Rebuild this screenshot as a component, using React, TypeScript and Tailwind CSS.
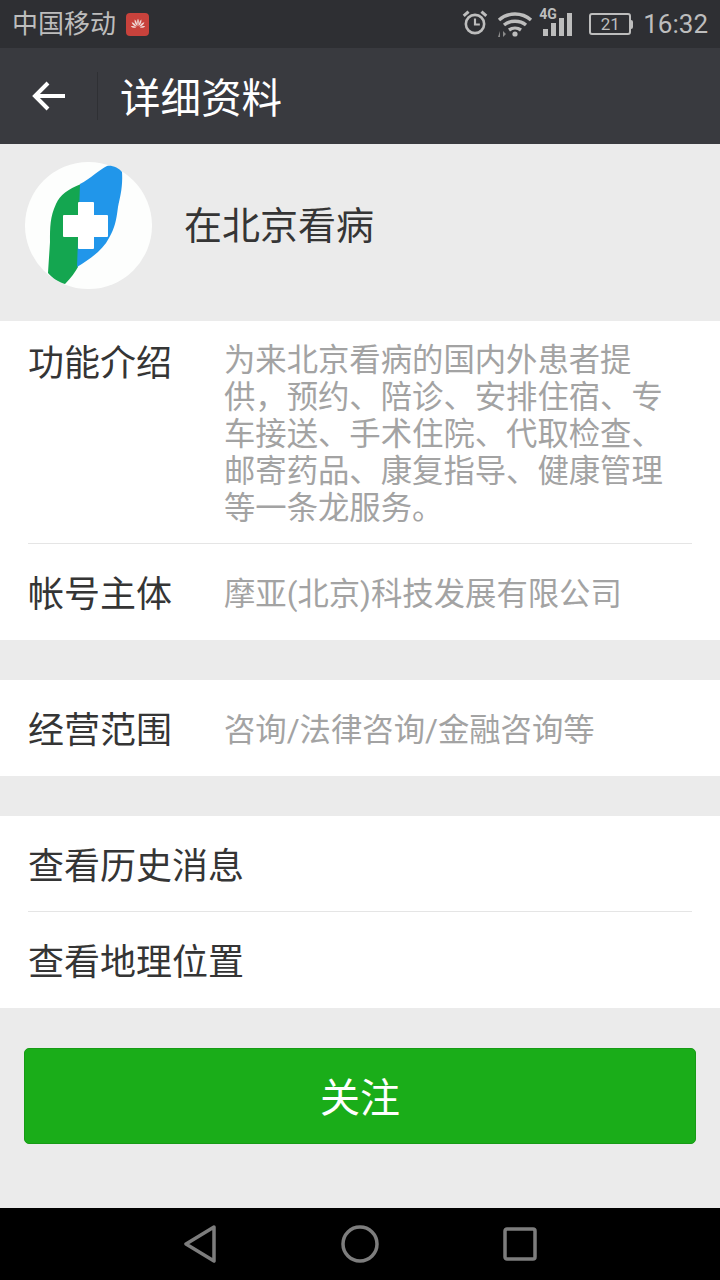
import React from "react";

const cjk = "font-['Roboto','Noto_Sans_CJK_SC',sans-serif]";

const StatusBar = () => (
  <div className="flex h-12 items-center justify-between bg-[#2e2f33] pl-3 pr-3 text-[#bdbdbd]">
    <div className="flex items-center gap-[10px]">
      <span className="text-[26px] leading-none">中国移动</span>
      <div className="flex h-[23px] w-[23px] items-center justify-center rounded-[4px] bg-[#c8423c]">
        <svg viewBox="0 0 24 24" className="h-[18px] w-[18px]" fill="#f0d9d6">
          <path d="M12 5c1.500 2 1.500 5 0 10-1.500-5-1.500-8 0-10z" />
          <path d="M7.500 6c2 1.500 3.500 4.500 3.700 9C8.500 12.500 7 9.500 7.500 6z" />
          <path d="M16.500 6c-2 1.500-3.500 4.500-3.700 9 2.700-2.500 4.200-5.500 3.700-9z" />
          <path d="M3.500 9.500c3 .5 5.500 3 6.700 6.200C7 15 4.500 13 3.500 9.500z" />
          <path d="M20.500 9.500c-3 .5-5.500 3-6.700 6.200 3.200-.7 5.700-2.700 6.700-6.200z" />
          <path d="M2.500 15c2.500-.5 5 0 7 1.500-2.500 1-5 .5-7-1.500zM21.500 15c-2.500-.5-5 0-7 1.500 2.500 1 5 .5 7-1.500z" />
        </svg>
      </div>
    </div>
    <div className="flex items-center">
      <svg viewBox="0 2 26 26" className="h-7 w-7" fill="none" stroke="#bdbdbd" strokeWidth="2.400">
        <circle cx="13" cy="15" r="8.500" />
        <path d="M13 10v5.500h4.500" strokeWidth="2" />
        <path d="M2.500 7.500 7 3.500M23.500 7.500 19 3.500" strokeWidth="2.800" />
      </svg>
      <svg viewBox="0 1 36 28" className="ml-2 h-7 w-9" fill="none" stroke="#bdbdbd" strokeWidth="3.400">
        <path d="M2 11c9-8 23-8 32 0" />
        <path d="M7 16c6-5 16-5 22 0" />
        <path d="M12 21c3.500-2.500 8.500-2.500 12 0" />
        <circle cx="18" cy="25" r="2.600" fill="#bdbdbd" stroke="none" />
        <path d="M3 22v6H1zM6 22l3 3-3 3z" fill="#8a8a8a" stroke="none" />
      </svg>
      <div className="relative ml-2 h-[30px] w-[31px]">
        <span className="absolute -left-[2px] -top-[2px] font-['Roboto',sans-serif] text-[14px] leading-none font-bold">4G</span>
        <div className="absolute bottom-[3px] left-[2px] flex items-end gap-[3px]">
          <div className="h-[7px] w-[5px] bg-[#bdbdbd]" />
          <div className="h-[13px] w-[5px] bg-[#bdbdbd]" />
          <div className="h-[18px] w-[5px] bg-[#bdbdbd]" />
          <div className="h-[23px] w-[5px] bg-[#bdbdbd]" />
        </div>
      </div>
      <div className="ml-[17px] flex items-center">
        <div className="flex h-[22px] w-[42px] items-center justify-center rounded-[3px] border-2 border-[#bdbdbd] text-[17px] leading-none">21</div>
        <div className="h-[9px] w-[2px] rounded-r-sm bg-[#bdbdbd]" />
      </div>
      <span className="ml-[10px] text-[26px] leading-none">16:32</span>
    </div>
  </div>
);

const TitleBar = () => (
  <div className="flex h-24 items-center bg-[#393a3f]">
    <div className="flex h-12 w-[98px] items-center justify-center border-r border-[#2f3034]">
      <svg viewBox="0 0 34 30" className="h-[30px] w-[34px]" fill="none" stroke="#ffffff" strokeWidth="4">
        <path d="M33 15H3" />
        <path d="M16 2 3 15l13 13" />
      </svg>
    </div>
    <span className="ml-[22px] pt-[6px] text-[40.500px] leading-none text-white">详细资料</span>
  </div>
);

const Logo = () => (
  <div className="h-[127px] w-[127px] rounded-full bg-[#fdfefd]">
    <svg viewBox="0 0 127 127" className="h-[127px] w-[127px]">
      <path d="M56 22C43 27 35 33 31 42 25 55 25 65 25 80L23 111C27 116 34 120 40 122 46 116 50 110 53 105z" fill="#14a650" />
      <path d="M55 22C65 17 75 7 82 4 87 3 94 6 97 10 98 25 95 35 93 45 91 60 90 65 84 76 78 88 65 97 52 105z" fill="#2196ea" />
      <path d="M53 41a1 1 0 0 1 1-1h14a1 1 0 0 1 1 1v12h13a1 1 0 0 1 1 1v20a1 1 0 0 1-1 1H69v11a1 1 0 0 1-1 1H54a1 1 0 0 1-1-1V75H39a1 1 0 0 1-1-1V54a1 1 0 0 1 1-1h14z" fill="#ffffff" />
    </svg>
  </div>
);

const InfoRow = ({ label, value }: { label: string; value: string }) => (
  <div className="flex h-24 items-center px-7 pt-[6px]">
    <span className="w-[196px] shrink-0 text-[36px] leading-none text-[#353535]">{label}</span>
    <span className="text-[31.350px] leading-none text-[#a3a3a3]">{value}</span>
  </div>
);

const LinkRow = ({ label }: { label: string }) => (
  <div className="flex h-24 items-center pl-7 pt-[6px] text-[36px] leading-none text-[#353535]">{label}</div>
);

export default function App() {
  return (
    <div className={`flex h-[1280px] w-[720px] flex-col overflow-hidden bg-[#ebebeb] ${cjk}`}>
      <StatusBar />
      <TitleBar />

      <div className="flex h-[177px] items-center gap-8 pb-[14px] pl-[25px]">
        <Logo />
        <span className="text-[38px] leading-none text-[#353535]">在北京看病</span>
      </div>

      <div className="bg-white">
        <div className="mx-7 flex h-[223px] border-b border-[#e5e5e5] pt-[21px]">
          <span className="w-[196px] shrink-0 text-[36px] leading-[44px] text-[#353535]">功能介绍</span>
          <p className="w-[444px] text-[31.350px] leading-[37px] text-[#a3a3a3]">
            为来北京看病的国内外患者提供，预约、陪诊、安排住宿、专车接送、手术住院、代取检查、邮寄药品、康复指导、健康管理等一条龙服务。
          </p>
        </div>
        <InfoRow label="帐号主体" value="摩亚(北京)科技发展有限公司" />
      </div>

      <div className="mt-10 bg-white">
        <InfoRow label="经营范围" value="咨询/法律咨询/金融咨询等" />
      </div>

      <div className="mt-10 bg-white">
        <div className="mx-7 flex h-24 items-center border-b border-[#e5e5e5] pt-[6px] text-[36px] leading-none text-[#353535]">
          查看历史消息
        </div>
        <LinkRow label="查看地理位置" />
      </div>

      <div className="mx-6 mt-10 flex h-24 items-center justify-center rounded-[5px] border border-[#179b16] bg-[#1aad19] pt-[6px] text-[40px] leading-none text-white">
        关注
      </div>

      <div className="mt-auto flex h-[72px] items-center justify-center gap-[124px] bg-black">
        <svg viewBox="0 0 34 38" className="h-[38px] w-[34px]" fill="none" stroke="#7d7d7d" strokeWidth="3.500" strokeLinejoin="round">
          <path d="M31 2 3 19l28 17z" />
        </svg>
        <svg viewBox="0 0 38 38" className="h-[38px] w-[38px]" fill="none" stroke="#7d7d7d" strokeWidth="3.500">
          <circle cx="19" cy="19" r="17" />
        </svg>
        <svg viewBox="0 0 34 34" className="h-[34px] w-[34px]" fill="none" stroke="#7d7d7d" strokeWidth="3.500" strokeLinejoin="round">
          <rect x="2" y="2" width="30" height="30" rx="2" />
        </svg>
      </div>
    </div>
  );
}
